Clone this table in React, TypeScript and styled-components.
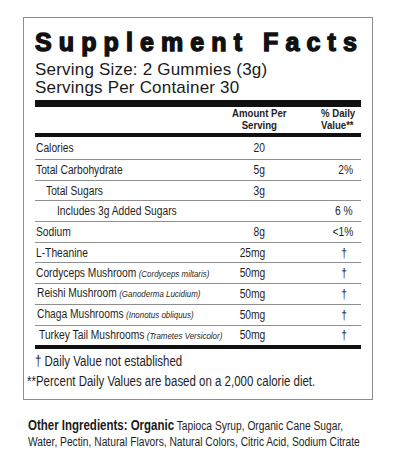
import React from "react";
import styled, { createGlobalStyle } from "styled-components";

const SANS = `"Liberation Sans", Arial, Helvetica, sans-serif`;

const GlobalStyle = createGlobalStyle`
  html, body { margin: 0; padding: 0; background: #ffffff; }
  body { font-family: ${SANS}; color: #1a1a1a; }
  * { box-sizing: border-box; }
`;

/* Arial Narrow look: the regular face compressed horizontally */
const Narrow = styled.span<{ $origin?: "left" | "right" | "center"; $scale?: number }>`
  display: inline-block;
  white-space: nowrap;
  transform: scaleX(${(p) => p.$scale ?? 0.82});
  transform-origin: ${(p) => p.$origin ?? "left"} center;
`;

const Page = styled.div`
  width: 416px;
  height: 462px;
  padding: 17px 0 0 23px;
  overflow: hidden;
`;

const Panel = styled.section`
  width: 350px;
  border: 1px solid #8c8c8c;
  padding: 12px 11px 8px 11px;
  display: flex;
  flex-direction: column;
`;

const Title = styled.h1`
  margin: 0;
  font-family: ${SANS};
  font-weight: 700;
  font-size: 25px;
  line-height: 25px;
  letter-spacing: 7.1px;
  -webkit-text-stroke: 1.4px #111;
  color: #111;
  white-space: nowrap;
`;

const ServingLine = styled.div<{ $first?: boolean }>`
  font-family: ${SANS};
  font-size: 17px;
  line-height: 18px;
  letter-spacing: 0.2px;
  color: #1a1a1a;
  margin-top: ${(p) => (p.$first ? "6px" : "0")};
  white-space: nowrap;
`;

const Bar = styled.div<{ $h: number; $mt?: number }>`
  height: ${(p) => p.$h}px;
  margin-top: ${(p) => p.$mt ?? 0}px;
  background: #111;
`;

const HeaderRow = styled.div`
  height: 26px;
  display: grid;
  grid-template-columns: minmax(0, 1fr) 54px 40px;
  column-gap: 35px;
  font-weight: 700;
  font-size: 10.7px;
  line-height: 12px;
  color: #1e1e1e;
`;

const HeaderCell = styled.div<{ $align: "center" | "flex-start" }>`
  display: flex;
  justify-content: ${(p) => p.$align};
  text-align: ${(p) => (p.$align === "center" ? "center" : "left")};
`;

const Rows = styled.div`
  display: flex;
  flex-direction: column;
`;

const Row = styled.div<{ $h: number; $last?: boolean }>`
  display: grid;
  grid-template-columns: minmax(0, 1fr) 50px 96px;
  align-items: center;
  height: ${(p) => p.$h + (p.$last ? 0 : 1)}px;
  border-bottom: ${(p) => (p.$last ? "none" : "1px solid #8f8f8f")};
  font-size: 12.5px;
  line-height: 14px;
  color: #1e1e1e;
`;

const Name = styled.div<{ $indent: number }>`
  padding-left: ${(p) => p.$indent}px;
  white-space: nowrap;
`;

const Latin = styled.span`
  font-style: italic;
  font-size: 9.7px;
  margin-left: 3px;
`;

const Amount = styled.div`
  display: flex;
  justify-content: flex-end;
`;

const Daily = styled.div<{ $dagger?: boolean }>`
  display: flex;
  justify-content: flex-end;
  padding-right: ${(p) => (p.$dagger ? "14px" : "8px")};
`;

const Notes = styled.div`
  margin-top: 2px;
  font-size: 14px;
  line-height: 20px;
  color: #1e1e1e;
`;

const Note = styled.div<{ $shift?: number }>`
  margin-left: ${(p) => p.$shift ?? 0}px;
`;

const Ingredients = styled.div`
  margin: 17px 0 0 5px;
  font-size: 12.5px;
  line-height: 16px;
  color: #1e1e1e;
`;

const Strong = styled.strong`
  font-weight: 700;
  font-size: 14px;
  color: #1a1a1a;
`;

type Item = {
  name: string;
  latin?: string;
  amount: string;
  dv: string;
  indent: number;
  h: number;
};

const items: Item[] = [
  { name: "Calories", amount: "20", dv: "", indent: 1, h: 22 },
  { name: "Total Carbohydrate", amount: "5g", dv: "2%", indent: 1, h: 19.7 },
  { name: "Total Sugars", amount: "3g", dv: "", indent: 11, h: 19.7 },
  { name: "Includes 3g Added Sugars", amount: "", dv: "6 %", indent: 22, h: 19.7 },
  { name: "Sodium", amount: "8g", dv: "<1%", indent: 1, h: 19.7 },
  { name: "L-Theanine", amount: "25mg", dv: "†", indent: 1, h: 19.7 },
  { name: "Cordyceps Mushroom", latin: "(Cordyceps miltaris)", amount: "50mg", dv: "†", indent: 1, h: 19.7 },
  { name: "Reishi Mushroom", latin: "(Ganoderma Lucidium)", amount: "50mg", dv: "†", indent: 2, h: 19.7 },
  { name: "Chaga Mushrooms", latin: "(Inonotus obliquus)", amount: "50mg", dv: "†", indent: 2, h: 19.7 },
  { name: "Turkey Tail Mushrooms", latin: "(Trametes Versicolor)", amount: "50mg", dv: "†", indent: 4, h: 19.7 },
];

export default function App() {
  return (
    <>
      <GlobalStyle />
      <Page>
        <Panel>
          <Title>Supplement Facts</Title>
          <ServingLine $first>Serving Size: 2 Gummies (3g)</ServingLine>
          <ServingLine>Servings Per Container 30</ServingLine>
          <Bar $h={7} $mt={3} />
          <HeaderRow>
            <div />
            <HeaderCell $align="center">
              <Narrow $origin="center" $scale={0.9}>
                Amount Per
                <br />
                Serving
              </Narrow>
            </HeaderCell>
            <HeaderCell $align="flex-start">
              <Narrow $origin="left" $scale={0.9}>
                % Daily
                <br />
                Value**
              </Narrow>
            </HeaderCell>
          </HeaderRow>
          <Bar $h={4} />
          <Rows>
            {items.map((it, i) => (
              <Row key={it.name} $h={it.h} $last={i === items.length - 1}>
                <Name $indent={it.indent}>
                  <Narrow $origin="left">
                    {it.name}
                    {it.latin && <Latin>{it.latin}</Latin>}
                  </Narrow>
                </Name>
                <Amount>
                  <Narrow $origin="right">{it.amount}</Narrow>
                </Amount>
                <Daily $dagger={it.dv === "†"}>
                  <Narrow $origin="right">{it.dv}</Narrow>
                </Daily>
              </Row>
            ))}
          </Rows>
          <Bar $h={4} />
          <Notes>
            <Note>
              <Narrow>† Daily Value not established</Narrow>
            </Note>
            <Note $shift={-8}>
              <Narrow>**Percent Daily Values are based on a 2,000 calorie diet.</Narrow>
            </Note>
          </Notes>
        </Panel>
        <Ingredients>
          <Narrow>
            <Strong>Other Ingredients: Organic</Strong> Tapioca Syrup, Organic Cane Sugar,
            <br />
            Water, Pectin, Natural Flavors, Natural Colors, Citric Acid, Sodium Citrate
          </Narrow>
        </Ingredients>
      </Page>
    </>
  );
}
